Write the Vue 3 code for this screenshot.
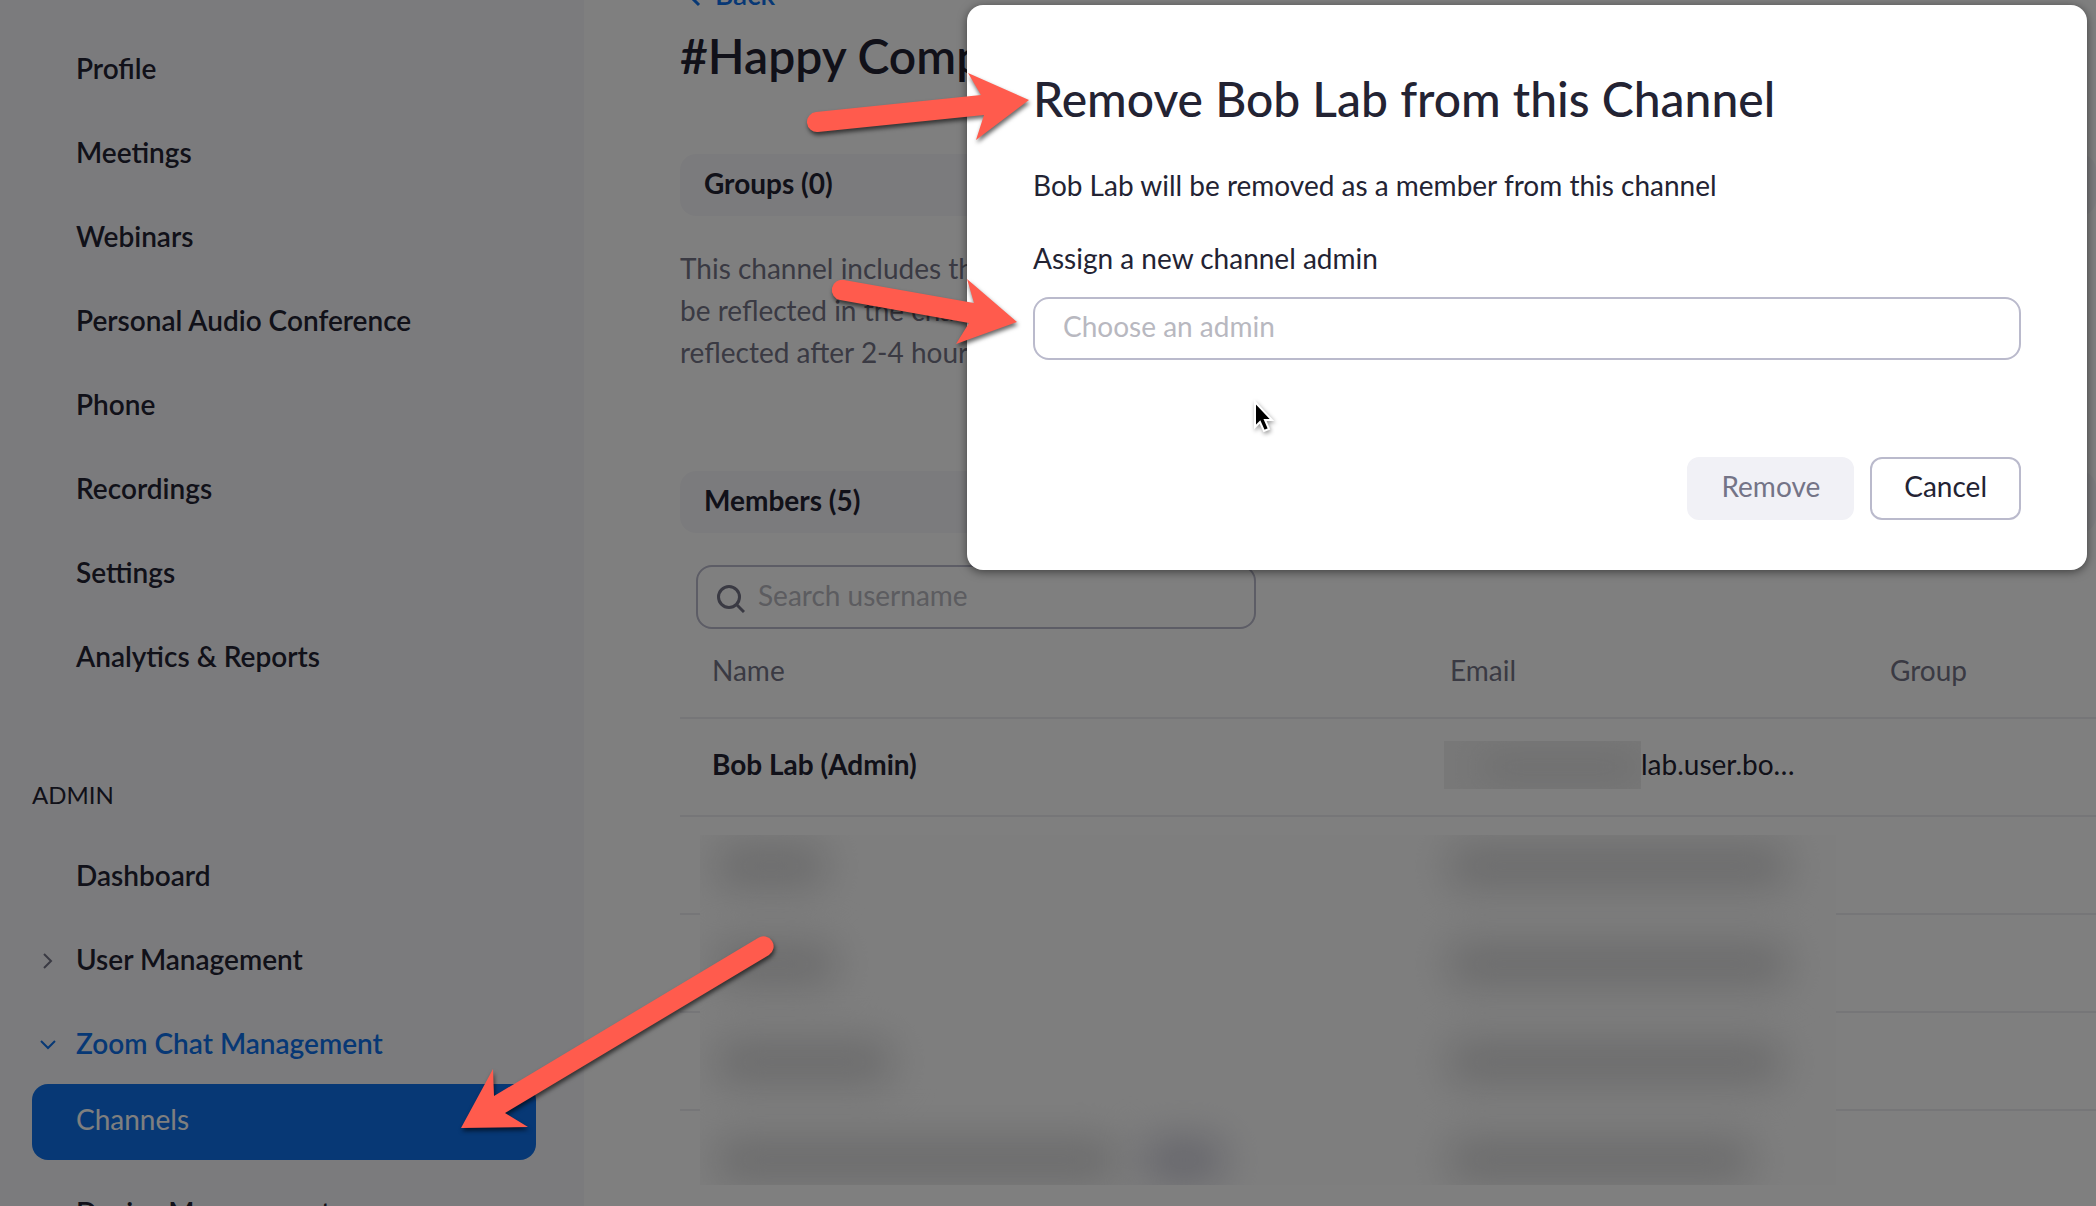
<script setup>
const personal = [
  'Profile',
  'Meetings',
  'Webinars',
  'Personal Audio Conference',
  'Phone',
  'Recordings',
  'Settings',
  'Analytics & Reports',
]

const arrows = [
  'M816 112 L981 95 L968 73 L1029 100 L976 140 L984 115 L818 132 A10 10 0 0 1 816 112 Z',
  'M844 280 L974 303 L967 279 L1017 322 L956 344 L969 323 L840 300 A10 10 0 0 1 844 280 Z',
  'M758 938 L494 1096 L493 1069 L461 1128 L528 1127 L505 1113 L769 955 A10 10 0 0 0 758 938 Z',
]

// Widths of the blurred name and email in each hidden member row
const hiddenRows = [
  { name: 110, email: 340 },
  { name: 120, email: 340 },
  { name: 176, email: 334 },
  { name: 400, tag: 80, email: 304 },
]
</script>

<template>
  <div class="page">
    <nav class="sidebar">
      <a v-for="item in personal" :key="item" href="#" class="item">{{ item }}</a>
      <h2 class="section">ADMIN</h2>
      <a href="#" class="item">Dashboard</a>
      <a href="#" class="item">
        <svg class="chevron" viewBox="0 0 20 20"><path d="M6 3 L13 10 L6 17" /></svg>
        User Management
      </a>
      <a href="#" class="item open">
        <svg class="chevron" viewBox="0 0 20 20"><path d="M3 6 L10 13 L17 6" /></svg>
        Zoom Chat Management
      </a>
      <a href="#" class="item current">Channels</a>
      <a href="#" class="item">Device Management</a>
    </nav>

    <main class="content">
      <a href="#" class="back">
        <svg class="back-icon" viewBox="0 0 20 20"><path d="M15 2 L7 10 L15 18" /></svg>
        Back
      </a>
      <h1 class="title">#Happy Company</h1>

      <h3 class="band">Groups (0)</h3>
      <p class="note">
        This channel includes the<br />be reflected in the channel<br />reflected after 2-4 hours
      </p>

      <h3 class="band">Members (5)</h3>
      <div class="search">
        <svg class="search-icon" viewBox="0 0 28 28">
          <circle cx="12" cy="12" r="10.5" />
          <path d="M19.500 19.500 L27 27" />
        </svg>
        <input type="text" placeholder="Search username" aria-label="Search username" />
      </div>

      <div class="members">
        <table>
          <colgroup>
            <col class="col-name" />
            <col class="col-email" />
            <col />
          </colgroup>
          <thead>
            <tr><th>Name</th><th>Email</th><th>Group</th></tr>
          </thead>
          <tbody>
            <tr>
              <td class="strong">Bob Lab (Admin)</td>
              <td><div class="email"><span class="mask"><i></i></span>lab.user.bo…</div></td>
              <td></td>
            </tr>
            <tr v-for="(row, i) in hiddenRows" :key="i"><td></td><td></td><td></td></tr>
          </tbody>
        </table>
        <div class="redaction">
          <div v-for="(row, i) in hiddenRows" :key="i" class="hidden-row">
            <div class="hidden-name">
              <i class="blob" :style="{ width: row.name + 'px' }"></i>
              <i v-if="row.tag" class="blob tag" :style="{ width: row.tag + 'px' }"></i>
            </div>
            <i class="blob" :style="{ width: row.email + 'px' }"></i>
          </div>
        </div>
      </div>
    </main>

    <div class="backdrop">
      <section class="dialog" role="dialog" aria-labelledby="dialog-title">
        <h2 id="dialog-title" class="dialog-title">Remove Bob Lab from this Channel</h2>
        <p class="dialog-text">Bob Lab will be removed as a member from this channel</p>
        <label class="dialog-label" for="admin">Assign a new channel admin</label>
        <input id="admin" class="dialog-input" type="text" placeholder="Choose an admin" />
        <div class="actions">
          <button type="button" class="remove" disabled>Remove</button>
          <button type="button">Cancel</button>
        </div>
      </section>
    </div>

    <svg class="arrows" viewBox="0 0 1040 1160" aria-hidden="true">
      <path v-for="d in arrows" :key="d" :d="d" />
    </svg>
    <svg class="cursor" viewBox="0 0 24 36" aria-hidden="true">
      <path d="M3 3 V28 L8 23 L12 32 L17 30 L13 21 H20 Z" />
    </svg>
  </div>
</template>

<style>
body {
  margin: 0;
  overflow: hidden;
}
</style>

<style scoped>
.page {
  position: relative;
  display: flex;
  height: 100vh;
  overflow: hidden;
  background: #fff;
  color: #232333;
  font: 400 28px/42px Lato, "Noto Sans", sans-serif;
}
h1, h2, h3, p {
  margin: 0;
}
a {
  color: inherit;
  text-decoration: none;
}
svg {
  display: block;
  fill: none;
  stroke: currentColor;
  stroke-width: 2;
}
input, button {
  box-sizing: border-box;
  font: inherit;
  color: inherit;
}

.sidebar {
  flex: none;
  display: flex;
  flex-direction: column;
  box-sizing: border-box;
  width: 584px;
  padding: 26px 48px 0 32px;
  background: #f7f7fa;
}
.item {
  position: relative;
  flex: none;
  padding: 21px 44px;
  font-weight: 600;
}
.chevron {
  position: absolute;
  left: 6px;
  top: 34px;
  width: 20px;
  height: 20px;
  color: #747487;
}
.open, .open .chevron {
  color: #0e71eb;
}
.open {
  padding-bottom: 20px;
}
.section {
  margin: 79px 0 20px;
  font-size: 24px;
  font-weight: 400;
  line-height: 36px;
}
.current {
  margin-bottom: 10px;
  padding: 14px 44px 20px;
  border-radius: 16px;
  background: #0e71eb;
  color: #fff;
  font-weight: 400;
}

.content {
  flex: 1;
  min-width: 0;
  margin-top: -27px;
  padding-left: 96px;
}
.back {
  display: flex;
  align-items: center;
  gap: 11px;
  padding-left: 4px;
  color: #0e71eb;
  font-weight: 600;
}
.back-icon {
  width: 20px;
  height: 20px;
  margin-top: 6px;
  stroke-width: 3;
}
.title {
  margin: 11px 0 68px;
  font-size: 48px;
  font-weight: 600;
  line-height: 60px;
  white-space: nowrap;
}
.band {
  padding: 8px 24px 12px;
  border-radius: 16px;
  background: #f7f7fa;
  font-size: 28px;
  font-weight: 700;
}
.note {
  margin: 31px 0 98px;
  color: #747487;
}
.search {
  display: flex;
  align-items: center;
  gap: 13px;
  box-sizing: border-box;
  width: 560px;
  height: 64px;
  margin: 32px 0 0 16px;
  padding: 0 19px;
  border: 2px solid #babacc;
  border-radius: 16px;
}
.search-icon {
  flex: none;
  width: 28px;
  height: 28px;
  margin-top: 4px;
  color: #747487;
  stroke-width: 3;
}
.search input {
  flex: 1;
  min-width: 0;
  height: 56px;
  padding: 0 0 4px;
  border: 0;
  outline: 0;
  background: none;
}
.search input::placeholder, .dialog-input::placeholder {
  color: #b8b8c0;
  opacity: 1;
}

.members {
  position: relative;
}
table {
  width: 100%;
  table-layout: fixed;
  border-collapse: separate;
  border-spacing: 0;
}
.col-name {
  width: 758px;
}
.col-email {
  width: 440px;
}
th, td {
  height: 42px;
  border-bottom: 2px solid #ededf0;
  text-align: left;
}
th {
  padding: 20px 0 26px 32px;
  color: #747487;
  font-weight: 400;
}
td {
  padding: 24px 0 30px 32px;
}
th:nth-child(n + 2), td:nth-child(n + 2) {
  padding-left: 12px;
}
.strong {
  font-weight: 700;
}
.email {
  display: flex;
  height: 42px;
}
.mask {
  flex: none;
  width: 197px;
  height: 48px;
  margin: -2px 0 0 -6px;
  overflow: hidden;
  background: #f1f1f1;
}
.mask i {
  display: block;
  width: 160px;
  height: 24px;
  margin: 14px 0 0 36px;
  background: #d8d8d9;
  filter: blur(18px);
}
.redaction {
  position: absolute;
  left: 20px;
  top: 206px;
  width: 1136px;
  height: 350px;
  overflow: hidden;
  background: #fdfdfd;
}
.hidden-row {
  display: flex;
  align-items: center;
  height: 98px;
  padding-left: 16px;
}
.hidden-row:first-child {
  margin-top: -18px;
}
.hidden-name {
  display: flex;
  gap: 28px;
  width: 732px;
}
.blob {
  flex: none;
  height: 44px;
  border-radius: 12px;
  background: #d6d6d7;
  filter: blur(20px);
}
.tag {
  background: #cacad6;
}

.backdrop {
  position: absolute;
  inset: 0;
  display: flex;
  align-items: flex-start;
  justify-content: flex-end;
  padding: 5px 9px;
  background: rgba(0, 0, 0, 0.5);
}
.dialog {
  display: flex;
  flex-direction: column;
  box-sizing: border-box;
  width: 1120px;
  padding: 64px 66px 50px;
  border-radius: 16px;
  background: #fff;
  box-shadow: 0 2px 10px rgba(0, 0, 0, 0.5);
}
.dialog-title {
  margin-bottom: 35px;
  font-size: 48px;
  font-weight: 500;
  line-height: 60px;
}
.dialog-text {
  margin-bottom: 31px;
}
.dialog-label {
  margin-bottom: 18px;
}
.dialog-input {
  height: 63px;
  padding: 0 28px 5px;
  border: 2px solid #babacc;
  border-radius: 16px;
  background: #fff;
}
.actions {
  display: flex;
  justify-content: flex-end;
  gap: 16px;
  margin-top: 97px;
}
.actions button {
  height: 63px;
  padding: 0 32px 5px;
  border: 2px solid #babacc;
  border-radius: 12px;
  background: #fff;
}
.actions .remove {
  border-color: #f1f1f6;
  background: #f1f1f6;
  color: #747487;
}

.arrows {
  position: absolute;
  left: 0;
  top: 0;
  width: 1040px;
  height: 1160px;
  fill: #ff5b4d;
  stroke: none;
  filter: drop-shadow(1px 3px 2px rgba(0, 0, 0, 0.6));
  pointer-events: none;
}
.cursor {
  position: absolute;
  left: 1252px;
  top: 399px;
  width: 24px;
  height: 36px;
  fill: #000;
  stroke: #fff;
  filter: drop-shadow(1px 2px 2px rgba(0, 0, 0, 0.4));
  pointer-events: none;
}
</style>
